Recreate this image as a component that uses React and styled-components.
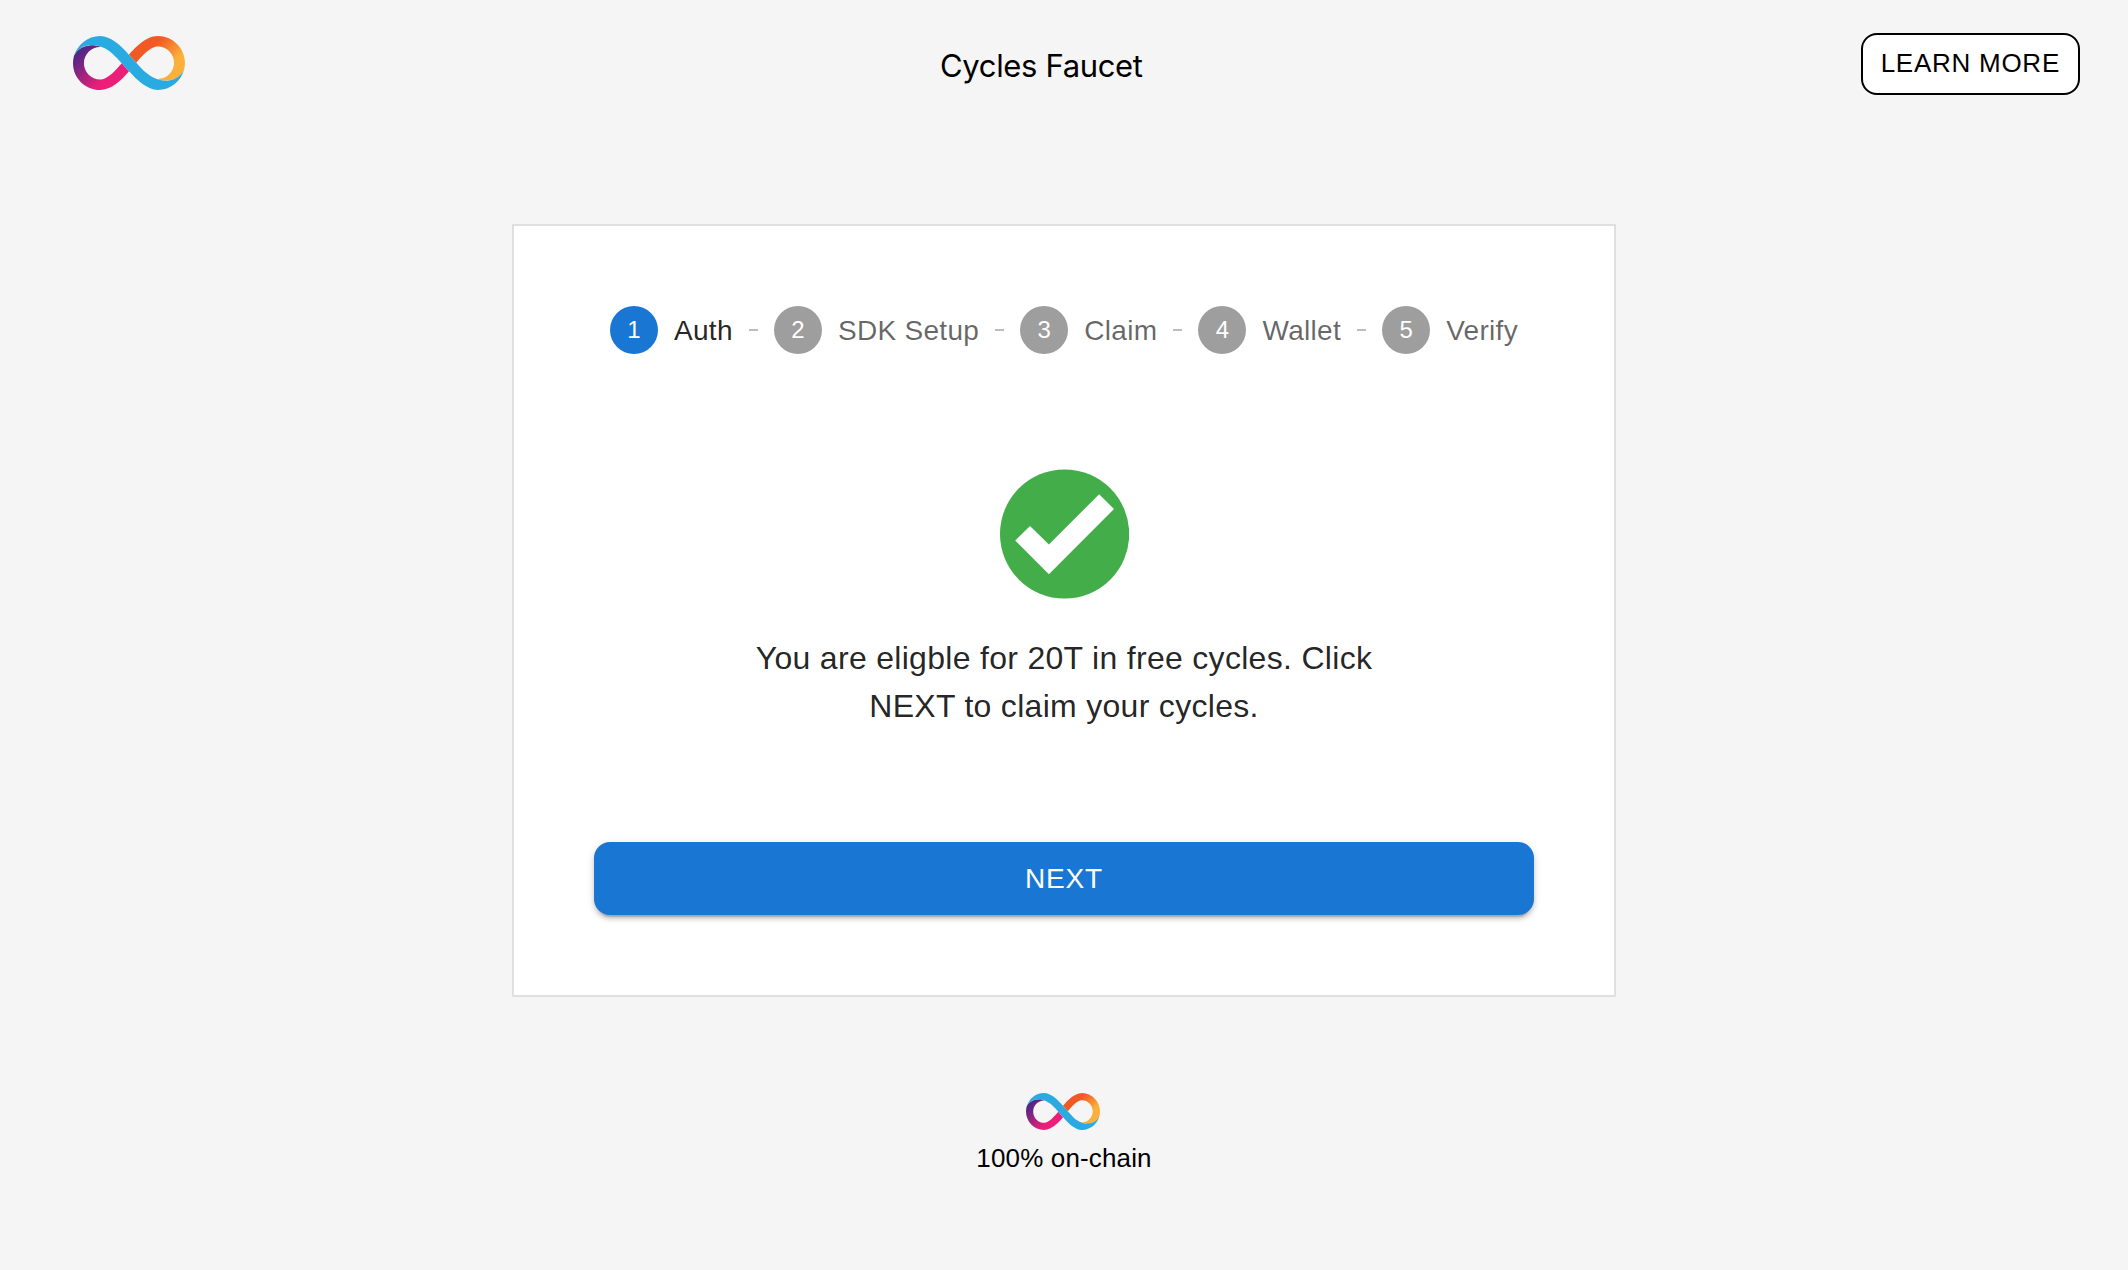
import React, { useId } from "react";
import styled, { createGlobalStyle } from "styled-components";

const GlobalStyle = createGlobalStyle`
  * { box-sizing: border-box; }
  body {
    margin: 0;
    background: #f5f5f5;
    color: #000;
    font-family: "Liberation Sans", Helvetica, Arial, sans-serif;
  }
`;

const Page = styled.div`
  min-height: 1270px;
  display: flex;
  flex-direction: column;
  align-items: center;
`;

const Header = styled.header`
  width: 100%;
  height: 128px;
  padding: 0 48px 0 36px;
  display: flex;
  align-items: center;
  justify-content: space-between;
`;

const LogoSlot = styled.div`
  width: 186px;
  display: flex;
  justify-content: center;
  padding-bottom: 2px;
`;

const LogoSvg = styled.svg`
  display: block;
  width: ${(p) => p.$width}px;
  height: ${(p) => p.$height}px;
`;

const Title = styled.h1`
  margin: 0;
  padding-top: 3px;
  width: 205px;
  text-align: center;
  white-space: nowrap;
  font: 400 31px/40px Inter, sans-serif;
  letter-spacing: -0.35px;
`;

const OutlinedButton = styled.button`
  font: 400 26px/45.5px "Liberation Sans", Helvetica, Arial, sans-serif;
  letter-spacing: 0.02857em;
  text-transform: uppercase;
  padding: 6px 18px;
  border: 2px solid #000;
  border-radius: 16px;
  background: #fff;
  color: #000;
`;

const Card = styled.main`
  width: 1104px;
  height: 773px;
  margin-top: 96px;
  padding: 80px;
  border: 2px solid #e0e0e0;
  background: #fff;
  display: flex;
  flex-direction: column;
`;

const Stepper = styled.ol`
  list-style: none;
  margin: 0;
  padding: 0 16px;
  display: flex;
  align-items: center;
  gap: 16px;
`;

const Step = styled.li`
  display: flex;
  align-items: center;
  gap: 16px;
  font-size: 28px;
  line-height: 40px;
  letter-spacing: 0.01071em;
  color: ${(p) => (p.$active ? "rgba(0,0,0,0.87)" : "rgba(0,0,0,0.6)")};
`;

const StepLabel = styled.span`
  padding-top: 2px;
`;

const StepNumber = styled.span`
  width: 48px;
  height: 48px;
  border-radius: 50%;
  display: flex;
  align-items: center;
  justify-content: center;
  font-size: 24px;
  letter-spacing: 0;
  color: #fff;
  background: ${(p) => (p.$active ? "#1976d2" : "#9e9e9e")};
`;

const Connector = styled.li`
  flex: 1 1 auto;
  height: 2px;
  background: #bdbdbd;
`;

const Result = styled.section`
  flex: 1;
  display: flex;
  flex-direction: column;
  align-items: center;
  padding-top: 115px;
`;

const CheckSvg = styled.svg`
  display: block;
  width: 130px;
  height: 130px;
`;

const Message = styled.p`
  width: 640px;
  margin: 35px 0 0;
  text-align: center;
  font-size: 32px;
  line-height: 48px;
  letter-spacing: 0.00938em;
  color: rgba(0, 0, 0, 0.87);
`;

const PrimaryButton = styled.button`
  width: 100%;
  height: 73px;
  border: 0;
  border-radius: 16px;
  background: #1976d2;
  color: #fff;
  font: 400 28px/49px "Liberation Sans", Helvetica, Arial, sans-serif;
  letter-spacing: 0.02857em;
  text-transform: uppercase;
  box-shadow:
    0 6px 2px -4px rgba(0, 0, 0, 0.2),
    0 4px 4px 0 rgba(0, 0, 0, 0.14),
    0 2px 10px 0 rgba(0, 0, 0, 0.12);
`;

const Footer = styled.footer`
  display: flex;
  flex-direction: column;
  align-items: center;
  margin-top: 96px;
  gap: 12px;
  font-size: 26px;
  line-height: 32px;
  letter-spacing: 0.15px;
`;

const FooterMark = styled.div`
  padding-right: 2px;
`;

function InfinityLogo({ width, height }) {
  const id = useId();
  const warm = `${id}-warm`;
  const cool = `${id}-cool`;
  return (
    <LogoSvg
      $width={width}
      $height={height}
      viewBox="0 0 358.8 180"
      preserveAspectRatio="none"
      aria-label="Internet Computer"
    >
      <defs>
        <linearGradient id={warm} gradientUnits="userSpaceOnUse" x1="224.8" y1="14.2" x2="348" y2="138.5">
          <stop offset="0.21" stopColor="#F15A24" />
          <stop offset="0.6841" stopColor="#FBB03B" />
        </linearGradient>
        <linearGradient id={cool} gradientUnits="userSpaceOnUse" x1="133.8" y1="165.6" x2="10.5" y2="41.3">
          <stop offset="0.21" stopColor="#ED1E79" />
          <stop offset="0.8929" stopColor="#522785" />
        </linearGradient>
      </defs>
      <path
        fill={`url(#${warm})`}
        d="M271.6 0c-20 0-41.9 10.9-65 32.4-10.9 10.1-20.5 21.1-27.5 29.8 0 0 11.2 12.9 23.5 26.8 6.7-8.4 16.2-19.8 27.3-30.6 20.5-19.9 33.9-23.4 41.6-23.4 28.8 0 52.2 24.2 52.2 54.1 0 29.6-23.4 53.8-52.2 54.1-1.4 0-3-.2-5-.6 8.4 3.9 17.5 6.7 26 6.7 52.8 0 63.2-36.5 63.8-39.1 1.5-6.7 2.4-13.7 2.4-20.9C358.6 40.4 319.6 0 271.6 0z"
      />
      <path
        fill={`url(#${cool})`}
        d="M87.1 180c20 0 41.9-10.9 65-32.4 10.9-10.1 20.5-21.1 27.5-29.8 0 0-11.2-12.9-23.5-26.8-6.7 8.4-16.2 19.8-27.3 30.6-20.5 19.9-33.9 23.4-41.6 23.4-28.8 0-52.2-24.2-52.2-54.1 0-29.6 23.4-53.8 52.2-54.1 1.4 0 3 .2 5 .6-8.4-3.9-17.5-6.7-26-6.7C13.4 30.6 3 67.1 2.4 69.7.9 76.4 0 83.4 0 90.6 0 139.6 39 180 87.1 180z"
      />
      <path
        fill="#29ABE2"
        d="M127.3 59.7c-5.8-5.6-34-28.5-61-29.3C18.1 29.2 4 64.2 2.7 68.7 12.9 29.5 46.4.2 87.2 0c33.3 0 67 32.7 91.9 62.2l.1-.1s11.2 12.9 23.5 26.8c0 0 14 16.5 28.8 31 5.8 5.6 33.9 28.2 60.9 29 49.5 1.4 63.2-35.6 63.9-38.4-9.8 39.5-43.5 68.9-84.5 69.1-33.3 0-67-32.7-92-62.2l-.1.2s-11.2-12.9-23.5-26.8c0-.1-14-16.6-28.9-31.1z"
      />
    </LogoSvg>
  );
}

const steps = ["Auth", "SDK Setup", "Claim", "Wallet", "Verify"];

export default function App() {
  return (
    <>
      <GlobalStyle />
      <Page>
        <Header>
          <LogoSlot>
            <InfinityLogo width={112} height={54} />
          </LogoSlot>
          <Title>Cycles Faucet</Title>
          <OutlinedButton>Learn more</OutlinedButton>
        </Header>
        <Card>
          <Stepper>
            {steps.map((label, i) => (
              <React.Fragment key={label}>
                {i > 0 && <Connector />}
                <Step $active={i === 0}>
                  <StepNumber $active={i === 0}>{i + 1}</StepNumber>
                  <StepLabel>{label}</StepLabel>
                </Step>
              </React.Fragment>
            ))}
          </Stepper>
          <Result>
            <CheckSvg viewBox="0 0 130 130">
              <circle cx="65.6" cy="65" r="64.6" fill="#43ad4a" />
              <path fill="#fff" d="M31 57 49.9 75.5 100.2 25.2 115 40 49.9 105.2 16.2 71.5z" />
            </CheckSvg>
            <Message>You are eligble for 20T in free cycles. Click NEXT to claim your cycles.</Message>
          </Result>
          <PrimaryButton>Next</PrimaryButton>
        </Card>
        <Footer>
          <FooterMark>
            <InfinityLogo width={74} height={37} />
          </FooterMark>
          <span>100% on-chain</span>
        </Footer>
      </Page>
    </>
  );
}
